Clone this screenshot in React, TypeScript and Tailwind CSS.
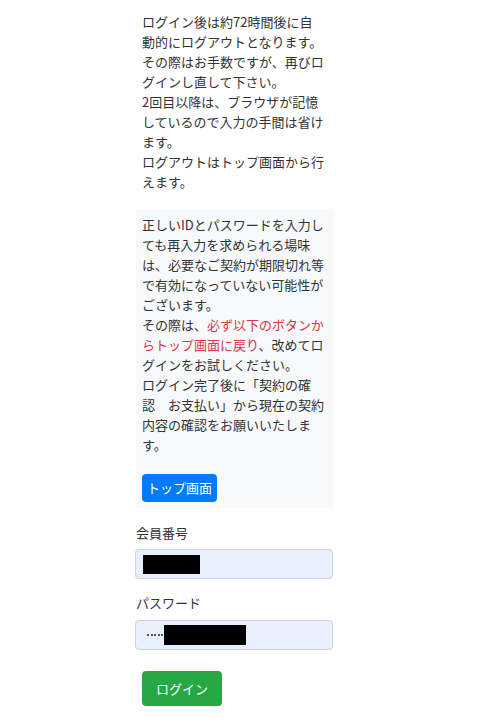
export default function App() {
  const intro = [
    "ログイン後は約72時間後に自",
    "動的にログアウトとなります。",
    "その際はお手数ですが、再びロ",
    "グインし直して下さい。",
    "2回目以降は、ブラウザが記憶",
    "しているので入力の手間は省け",
    "ます。",
    "ログアウトはトップ画面から行",
    "えます。",
  ];

  return (
    <div className="min-h-screen bg-white font-['Noto_Sans_CJK_JP','Noto_Sans',sans-serif] text-[13px] leading-[20px] text-[#333]">
      <div className="ml-[135px] w-[198px] pt-[12px]">
        {/* Notice */}
        <div className="px-[7px]">
          {intro.map((line, i) => (
            <div key={i} className="whitespace-nowrap">
              {line}
            </div>
          ))}
        </div>

        {/* Warning box */}
        <div className="mt-[17px] ml-[1px] bg-[#f8f9fa] px-[6px] py-[6px]">
          <div className="whitespace-nowrap">正しいIDとパスワードを入力し</div>
          <div className="whitespace-nowrap">ても再入力を求められる場味</div>
          <div className="whitespace-nowrap">は、必要なご契約が期限切れ等</div>
          <div className="whitespace-nowrap">で有効になっていない可能性が</div>
          <div className="whitespace-nowrap">ございます。</div>
          <div className="whitespace-nowrap">
            その際は、<span className="text-[#dc3545]">必ず以下のボタンか</span>
          </div>
          <div className="whitespace-nowrap">
            <span className="text-[#dc3545]">らトップ画面に戻り</span>、改めてロ
          </div>
          <div className="whitespace-nowrap">グインをお試しください。</div>
          <div className="whitespace-nowrap">ログイン完了後に「契約の確</div>
          <div className="whitespace-nowrap">認　お支払い」から現在の契約</div>
          <div className="whitespace-nowrap">内容の確認をお願いいたしま</div>
          <div className="whitespace-nowrap">す。</div>
          <button className="mt-[19px] flex h-[28px] items-center rounded-[4px] bg-[#007bff] px-[5px] text-[13px] text-white">
            トップ画面
          </button>
        </div>

        {/* Form */}
        <label className="mt-[15px] block px-[1px]">会員番号</label>
        <div className="mt-[6px] flex h-[30px] items-center rounded-[4px] border border-[#ced4da] bg-[#e8f0fe] px-[7px]">
          <span className="h-[19px] w-[57px] bg-black" />
        </div>

        <label className="mt-[14px] block px-[1px]">パスワード</label>
        <div className="mt-[7px] flex h-[30px] items-center rounded-[4px] border border-[#ced4da] bg-[#e8f0fe] pl-[11px]">
          <div className="flex gap-[1.5px]">
            {[0, 1, 2, 3, 4].map((i) => (
              <span key={i} className="h-[2px] w-[2px] rounded-full bg-[#222]" />
            ))}
          </div>
          <span className="ml-[1px] h-[20px] w-[82px] bg-black" />
        </div>

        <button className="ml-[7px] mt-[21px] flex h-[35px] items-center rounded-[4px] bg-[#28a745] px-[14px] text-[13px] text-white">
          ログイン
        </button>
      </div>
    </div>
  );
}
